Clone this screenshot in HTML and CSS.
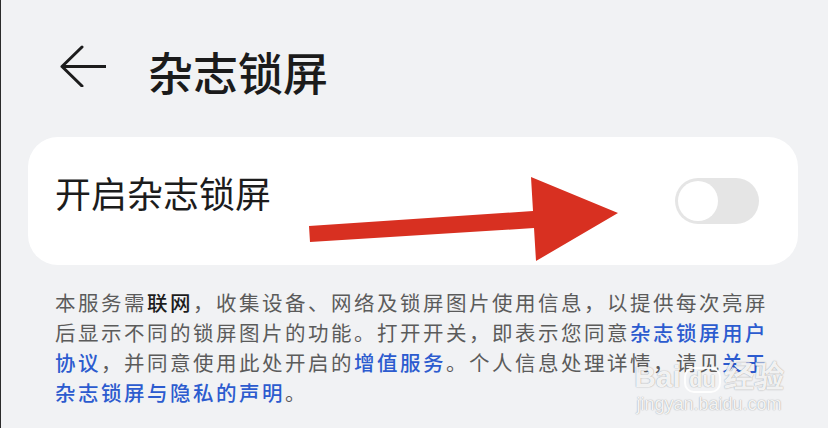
FILE: index.html
```html
<!DOCTYPE html>
<html lang="zh-CN">
<head>
    <meta charset="UTF-8">
    <meta name="viewport" content="width=device-width, initial-scale=1.0">
    <title>杂志锁屏</title>
    <link rel="stylesheet" href="styles.css">
</head>
<body>

    <div class="page">
        <!-- Header -->
        <div class="header">
            <svg class="back-icon" width="46" height="42" viewBox="0 0 46 42">
                <path d="M22 2 L2 21.5 L22 41 M2 21.5 L46 21.5" fill="none" stroke="#1c1c1c" stroke-width="3" stroke-linecap="round" stroke-linejoin="round"/>
            </svg>
            <h1 class="title">杂志锁屏</h1>
        </div>

        <!-- Switch card -->
        <div class="card">
            <span class="card-label">开启杂志锁屏</span>
            <div class="switch">
                <div class="switch-knob"></div>
            </div>
        </div>

        <p class="notice">本服务需<b>联网</b>，收集设备、网络及锁屏图片使用信息，以提供每次亮屏后显示不同的锁屏图片的功能。打开开关，即表示您同意<a href="#">杂志锁屏用户协议</a>，并同意使用此处开启的<a href="#">增值服务</a>。个人信息处理详情，请见<a href="#">关于杂志锁屏与隐私的声明</a>。</p>

        <!-- annotation arrow -->
        <svg class="red-arrow" width="828" height="428" viewBox="0 0 828 428">
            <polygon points="309,226 533,211 531,177 618,213 536,261 534,228 310,242" fill="#d83021"/>
        </svg>

        <!-- watermark -->
        <div class="watermark">
            <div class="wm-logo">Bai<span class="wm-du">du</span>经验</div>
            <div class="wm-url">jingyan.baidu.com</div>
        </div>
    </div>

</body>
</html>
```

FILE: styles.css
```css
/* Page */
body {
    margin: 0;
    background-color: #f1f2f4;
    font-family: "Noto Sans CJK SC", "Noto Sans", sans-serif;
}

.page {
    position: relative;
    height: 428px;
    border-left: 1px solid #2b2b2b;
    overflow: hidden;
}

/* Header */
.header {
    display: flex;
    align-items: center;
    height: 137px;
    padding-left: 59px;
    padding-top: 6px;
    box-sizing: border-box;
}

.back-icon {
    display: block;
    margin-top: -12px;
}

.title {
    margin: 0 0 0 42px;
    font-size: 45px;
    font-weight: 500;
    color: #1b1b1b;
    line-height: 56px;
}

/* Card */
.card {
    display: flex;
    align-items: center;
    justify-content: space-between;
    height: 128px;
    margin: 0 30px 0 27px;
    padding: 0 39px 0 27px;
    background-color: #fff;
    border-radius: 30px;
}

.card-label {
    font-size: 36px;
    color: #1c1c1c;
    margin-bottom: 18px;
}

.switch {
    width: 84px;
    height: 46px;
    padding: 3px;
    box-sizing: border-box;
    border-radius: 23px;
    background-color: #e5e5e5;
}

.switch-knob {
    width: 40px;
    height: 40px;
    border-radius: 50%;
    background-color: #fff;
}

/* Notice text */
.notice {
    width: 716px;
    margin: 22px 0 0 54px;
    font-size: 20.5px;
    letter-spacing: 2.5px;
    line-height: 30px;
    color: #5b5b5b;
}

.notice b {
    font-weight: 500;
    color: #1c1c1c;
}

.notice a {
    color: #2c5bcf;
    font-weight: 500;
    text-decoration: none;
}

/* Overlays */
.red-arrow {
    position: absolute;
    left: -1px;
    top: 0;
}

.watermark {
    position: absolute;
    left: 628px;
    top: 362px;
    width: 160px;
    text-align: center;
    color: rgba(255, 255, 255, 0.9);
    text-shadow: 0 0 1px rgba(0, 0, 0, 0.3), 0 0 2px rgba(0, 0, 0, 0.15);
}

.wm-logo {
    font-family: "Liberation Sans", sans-serif;
    font-size: 30px;
    font-weight: bold;
    line-height: 30px;
}

.wm-du {
    display: inline-block;
    padding: 0 3px;
    margin: 0 3px;
    border: 2px solid rgba(255, 255, 255, 0.9);
    border-radius: 10px;
    font-size: 22px;
    line-height: 22px;
}

.wm-url {
    font-family: "Liberation Sans", sans-serif;
    font-size: 18px;
    line-height: 22px;
}
```
